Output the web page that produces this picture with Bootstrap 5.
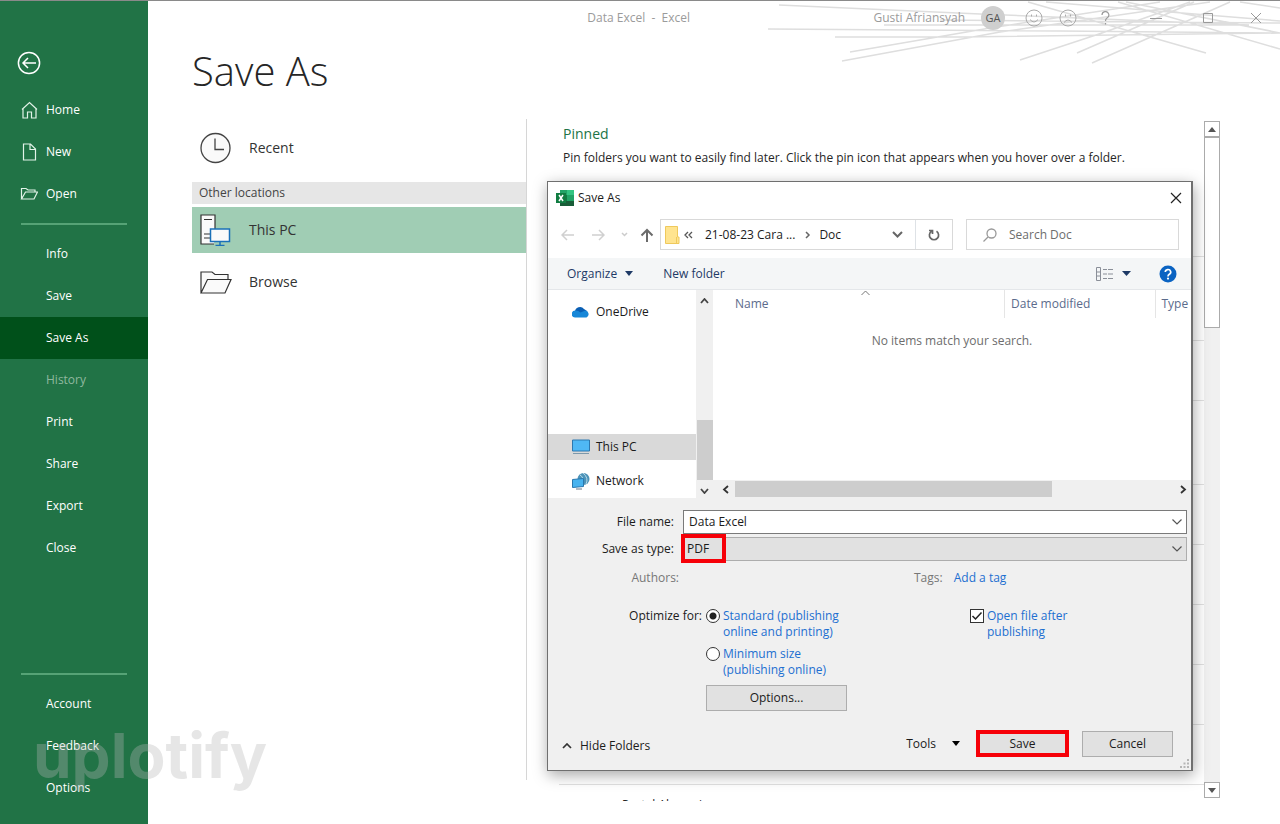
<!DOCTYPE html>
<html lang="en">
<head>
<meta charset="utf-8">
<meta name="viewport" content="width=device-width, initial-scale=1">
<title>Data Excel - Excel</title>
<link href="https://cdn.jsdelivr.net/npm/bootstrap@5.3.0/dist/css/bootstrap.min.css" rel="stylesheet">
<style>
  body { font-family: "Open Sans", "Noto Sans", sans-serif; font-size: 12px; line-height: 16px; color: #262626; background: #fff; }
  .app { min-height: 100vh; border-top: 1px solid #8a8a8a; overflow: hidden; }
  button, input, select { font: inherit; color: inherit; }
  .plain { background: none; border: 0; padding: 0; }
  svg { display: block; flex: none; }

  /* backstage navigation */
  .side { width: 148px; background: #217346; padding-top: 48px; padding-bottom: 15px; }
  .side a { color: #fff; text-decoration: none; height: 42px; padding-left: 46px; position: relative; font-weight: 500; }
  .side a svg { position: absolute; left: 20px; }
  .side .active { background: #00501a; }
  .side .off { color: #8fb89f; }
  .side .back { height: 28px; margin: 0 0 12px 16px; }
  .side hr { margin: 8px 21px; border: 0; border-top: 2px solid #56a376; opacity: 1; }
  .wmark { left: 33px; bottom: 32px; font: 700 62px/72px Inter, sans-serif; color: rgba(182,182,182,.34); pointer-events: none; z-index: 5; }

  /* window header */
  .caption { height: 33px; color: #9b9b9b; padding-right: 18px; }
  .doc-name { padding-left: 256px; }
  .lines { right: 0; top: 0; z-index: 0; }
  .avatar { width: 24px; height: 24px; background: #cfcfcf; color: #555; font-size: 11px; }
  h1 { font-size: 40px; line-height: 52px; font-weight: 300; margin: 11px 0 22px 44px; color: #262626; }
  .columns { margin-left: 44px; }

  /* places */
  .places { width: 335px; border-right: 1px solid #d6d6d6; margin-bottom: 44px; }
  .place { height: 58px; font-size: 14px; width: 100%; text-align: left; padding-left: 8px !important; gap: 17px; color: #333; }
  .place.on { background: #a0cdb4; height: 46px; }
  .band { background: #e6e6e6; height: 22px; padding: 0 7px; margin-bottom: 3px; margin-top: 5px; color: #444; line-height: 22px; }

  /* folder list behind the dialog */
  .folders { padding-right: 60px; }
  .pinned { color: #217346; font-size: 14px; line-height: 20px; margin: 5px 0 6px; font-weight: 400; }
  .rows { margin: 7px 0 0; }
  .rows li { height: 60px; border-bottom: 1px solid #e1e1e1; }
  .rows .group { height: 84px; }
  .rows .cut { height: 16px; border: 0; overflow: hidden; padding: 12px 0 0 63px; }
  .vscroll { width: 16px; background: #f0f0f0; margin-top: 2px; margin-bottom: 26px; }
  .vscroll button { width: 16px; height: 16px; background: #fff; border: 1px solid #ababab; }
  .vscroll .thumb { height: 191px; background: #fff; border: 1px solid #ababab; }

  /* file dialog */
  .dlg { left: 20px; right: 87px; top: 62px; background: #f0f0f0; border: 1px solid #6f6f6f; border-right-width: 2px; box-shadow: 1px 4px 14px rgba(0,0,0,.35); color: #1b1b1b; z-index: 3; }
  .dlg-title { background: #fff; height: 31px; padding: 0 9px 0 8px; }
  .dlg-nav { background: #fff; height: 45px; padding: 6px 12px 8px 13px; }
  .box { border: 1px solid #d9d9d9; height: 31px; background: #fff; }
  .address { margin-left: 6px; }
  .search { flex: 0 0 213px; margin-left: 13px; color: #6d6d6d; }
  .search input { outline: 0; }
  .tools { background: #f4f6f7; height: 32px; padding: 0 14px 0 19px; color: #1e3a66; border-bottom: 1px solid #e4e7ea; }
  .new-folder { margin-left: 30px; }
  .tree { width: 148px; background: #fff; padding: 9px 0 4px; }
  .tree li { height: 26px; padding-left: 24px; gap: 6px; }
  .tree .gap-big { margin-bottom: 109px; }
  .tree .on { background: #d9d9d9; margin-bottom: 8px; }
  .sb { background: #f0f0f0; width: 17px; }
  .sb i { background: #cdcdcd; height: 60px; width: 16px; }
  .pane { background: #fff; }
  .pane th { font-weight: 400; color: #5b6b8c; height: 28px; padding: 0 0 0 6px; border-right: 1px solid #e5e5e5; }
  .pane th:first-child { padding-left: 22px; width: 61%; }
  .pane th:last-child { border: 0; width: 36px; }
  .pane td { color: #6d6d6d; text-align: center; padding: 15px 0 0; }
  .sort { left: 31%; }
  .hs { height: 18px; background: #f0f0f0; }
  .hs i { background: #cdcdcd; height: 16px; width: 68%; }
  .lab { width: 127px; text-align: right; padding-right: 5px; }
  .opt-lab { width: 150px; text-align: right; }
  .meta { color: #777; margin-top: 9px; }
  .half-a { width: 57%; }
  .opts { margin-top: 22px; }
  .opts label + label { margin-top: 6px; }
  .combo { height: 24px; border: 1px solid #7a7a7a; border-radius: 0; padding: 0 6px 2px 5px; background: #fff url("data:image/svg+xml,%3Csvg xmlns='http://www.w3.org/2000/svg' width='10' height='6'%3E%3Cpath d='M.5.5 5 5 9.5.5' fill='none' stroke='%23555' stroke-width='1.2'/%3E%3C/svg%3E") no-repeat right 4px center; appearance: none; outline: 0; }
  select.combo { background-color: #e1e1e1; border-color: #adadad; padding: 0 6px 0 3px; }
  .type-row { margin-top: 3px; }
  .mark-red { border: 4px solid #f60008; pointer-events: none; left: -2px; top: -3px; width: 45px; height: 29px; }
  .blue { color: #1d6fd0; text-decoration: none; }
  .tick { appearance: none; width: 14px; height: 14px; margin: 1px 3px 0 0; border: 1px solid #333; background: #fff; flex: none; }
  .tick[type=radio] { border-radius: 50%; }
  .tick[type=radio]:checked { background: radial-gradient(circle, #222 0 3px, #fff 4px); }
  .tick[type=checkbox]:checked { background: #fff url("data:image/svg+xml,%3Csvg xmlns='http://www.w3.org/2000/svg' width='12' height='12'%3E%3Cpath d='M1.5 6 4.5 9 10.5 2.5' fill='none' stroke='%23222' stroke-width='1.5'/%3E%3C/svg%3E") no-repeat center; }
  .actions { margin-top: 19px; padding: 0 14px 13px 10px; }
  .cmd { background: #e1e1e1; border: 1px solid #adadad; height: 26px; width: 91px; }
  .cmd.wide { width: 141px; margin-top: 7px; }
  .cmd.hot { border: 4px solid #f60008; width: 93px; height: 27px; line-height: 16px; padding: 0; margin-right: 13px; }
  .grip { right: 2px; bottom: 2px; }
</style>
</head>
<body>
<div class="app d-flex position-relative">

  <nav class="side d-flex flex-column flex-shrink-0" aria-label="File">
    <button class="plain back align-self-start" aria-label="Back"><svg width="26" height="26" viewBox="0 0 26 26" fill="none" stroke="#fff" stroke-width="1.5"><circle cx="13" cy="13" r="10.6"/><path d="M20 13H7.500M12 8l-5 5 5 5"/></svg></button>
    <a href="#" class="d-flex align-items-center"><svg width="18" height="18" viewBox="0 0 18 18" fill="none" stroke="#e2f3e8" stroke-width="1.200"><path d="M2 8.500 9.500 1.500 17 8.500M3 8v9h4.500v-6h4v6H16V8"/></svg>Home</a>
    <a href="#" class="d-flex align-items-center"><svg width="18" height="18" viewBox="0 0 18 18" fill="none" stroke="#e2f3e8" stroke-width="1.200"><path d="M3.500 1h7l5 5v11h-12zM10 1v5.500h5.500"/></svg>New</a>
    <a href="#" class="d-flex align-items-center"><svg width="18" height="18" viewBox="0 0 18 18" fill="none" stroke="#e2f3e8" stroke-width="1.200"><path d="M1.500 14V3.500H6l2 1.500h7v2M1.500 14l4-7H17.500l-3.500 7z"/></svg>Open</a>
    <hr>
    <a href="#" class="d-flex align-items-center">Info</a>
    <a href="#" class="d-flex align-items-center">Save</a>
    <a href="#" class="d-flex align-items-center active" aria-current="page">Save As</a>
    <a href="#" class="d-flex align-items-center off">History</a>
    <a href="#" class="d-flex align-items-center">Print</a>
    <a href="#" class="d-flex align-items-center">Share</a>
    <a href="#" class="d-flex align-items-center">Export</a>
    <a href="#" class="d-flex align-items-center">Close</a>
    <hr class="mt-auto">
    <a href="#" class="d-flex align-items-center">Account</a>
    <a href="#" class="d-flex align-items-center">Feedback</a>
    <a href="#" class="d-flex align-items-center">Options</a>
  </nav>
  <div class="wmark position-absolute">uplotify</div>

  <svg class="lines position-absolute" width="520" height="66" viewBox="0 0 520 66" fill="none" stroke="#dedede" stroke-width="1.500"><path d="M19 4 220 13 489 24M8 28 300 30 520 32M75 36H200L520 32M124 24H489M180 19 520 22M90 51 230 27 400 1M82 60 240 31 450 1M260 59 342 32 430 1M317 52 434 1M332 62 470 1M446 52 268 1M520 48 358 1M286 1 520 20M480 1 520 7M366 1 520 32"/></svg>

  <main class="flex-grow-1 d-flex flex-column">
    <header class="caption d-flex align-items-center position-relative">
      <span class="doc-name flex-grow-1 text-center">Data Excel&nbsp; -&nbsp; Excel</span>
      <div class="d-flex align-items-center gap-3">
        <span>Gusti Afriansyah</span>
        <span class="avatar rounded-circle d-flex align-items-center justify-content-center">GA</span>
        <button class="plain ms-1" aria-label="Smile"><svg width="18" height="18" viewBox="0 0 18 18" fill="none" stroke="#aaa"><circle cx="9" cy="9" r="8"/><path d="M5 10.500q4 5 8 0M6.500 5.500v2M11.500 5.500v2"/></svg></button>
        <button class="plain" aria-label="Frown"><svg width="18" height="18" viewBox="0 0 18 18" fill="none" stroke="#aaa"><circle cx="9" cy="9" r="8"/><path d="M5 13.500q4-5 8 0M6.500 5.500v2M11.500 5.500v2"/></svg></button>
        <button class="plain ms-2" aria-label="Help"><svg width="9" height="14" fill="none" stroke="#999" stroke-width="1.200"><path d="M1 4a3.400 3.400 0 1 1 5 3Q4.500 8 4.500 10M4.500 12v1.500"/></svg></button>
        <button class="plain ms-4" aria-label="Minimize"><svg width="12" height="12" stroke="#999"><path d="M0 6.500h12"/></svg></button>
        <button class="plain ms-4" aria-label="Maximize"><svg width="12" height="12" fill="none" stroke="#999"><path d="M1.500 1.500h9v9h-9z"/></svg></button>
        <button class="plain ms-3 ps-1" aria-label="Close window"><svg width="12" height="12" stroke="#999"><path d="m1 1 10 10M11 1 1 11"/></svg></button>
      </div>
    </header>
    <h1>Save As</h1>

    <div class="columns d-flex flex-grow-1">
      <section class="places flex-shrink-0" aria-label="Places">
        <button class="plain place d-flex align-items-center"><svg width="32" height="32" viewBox="0 0 32 32" fill="#fafafa" stroke="#444" stroke-width="1.300"><circle cx="15.500" cy="16" r="14.500"/><path d="M15 6.500v11h9" fill="none"/></svg>Recent</button>
        <div class="band">Other locations</div>
        <button class="plain place on d-flex align-items-center"><svg width="32" height="32" viewBox="0 0 32 32" fill="#fafafa" stroke="#333" stroke-width="1.200"><path d="M14 30H1V1h14v15M4 5.500h8M4 20h6M4 24h6"/><path d="M10.500 15h19v12.500h-19zM20 27.500V31M15.500 31.500h9" stroke="#1a70b8" stroke-width="1.500"/></svg>This PC</button>
        <button class="plain place d-flex align-items-center"><svg width="32" height="32" viewBox="0 0 32 32" fill="#fafafa" stroke="#333" stroke-width="1.200"><path d="M1 27V6h11l3 2.500h13V13M1 27l6.500-13.500H31L25 27z"/></svg>Browse</button>
      </section>

      <section class="folders position-relative flex-grow-1 d-flex" aria-label="Folders">
        <div class="flex-grow-1 ps-4 ms-2">
          <div class="ps-1">
            <h2 class="pinned">Pinned</h2>
            <div>Pin folders you want to easily find later. Click the pin icon that appears when you hover over a folder.</div>
          </div>
          <ul class="rows list-unstyled">
            <li class="group"></li><li class="group"></li><li></li><li class="group"></li><li></li><li></li><li></li><li></li><li></li>
            <li class="cut">Portal Absensi</li>
          </ul>
        </div>
        <div class="vscroll d-flex flex-column flex-shrink-0">
          <button class="plain d-flex align-items-center justify-content-center" aria-label="Scroll up"><svg width="8" height="5" fill="#555"><path d="M0 5 4 0l4 5z"/></svg></button>
          <div class="thumb"></div>
          <button class="mt-auto plain d-flex align-items-center justify-content-center" aria-label="Scroll down"><svg width="8" height="5" fill="#555"><path d="M0 0h8L4 5z"/></svg></button>
        </div>

        <div class="dlg position-absolute" role="dialog" aria-label="Save As">
          <div class="dlg-title d-flex align-items-center gap-1">
            <svg width="18" height="18" viewBox="0 0 18 18"><path fill="#21a366" d="M4 1h14v16H4z"/><path fill="#33c481" d="M11 1h7v5h-7z"/><path fill="#107c41" d="M4 6h7v6H4z"/><path fill="#185c37" d="M4 12h14v5H4z"/><path fill="#107c41" d="M0 4h10v10H0z"/><path d="m3 6 4 6M7 6l-4 6" stroke="#fff" stroke-width="1.500"/></svg>
            <span>Save As</span>
            <button class="plain ms-auto" aria-label="Close"><svg width="12" height="12" stroke="#222" stroke-width="1.200"><path d="m1 1 10 10M11 1 1 11"/></svg></button>
          </div>
          <div class="dlg-nav d-flex align-items-center">
            <button class="plain" aria-label="Back"><svg width="14" height="12" fill="none" stroke="#d0d0d0" stroke-width="1.500"><path d="M13 6H1M6 1 1 6l5 5"/></svg></button>
            <button class="plain ms-3" aria-label="Forward"><svg width="14" height="12" fill="none" stroke="#d0d0d0" stroke-width="1.500"><path d="M1 6h12M8 1l5 5-5 5"/></svg></button>
            <button class="plain ms-3" aria-label="History"><svg width="7" height="5" fill="none" stroke="#ccc" stroke-width="1.500"><path d="m1 1 2.500 2.500L6 1"/></svg></button>
            <button class="plain ms-2 ps-1" aria-label="Up"><svg width="14" height="14" fill="none" stroke="#6b6b6b" stroke-width="2"><path d="M7 14V2M1.500 7.500 7 2l5.500 5.500"/></svg></button>
            <div class="box address d-flex align-items-center flex-grow-1 ps-1">
              <svg width="15" height="18" viewBox="0 0 15 18"><path fill="#ffe48f" stroke="#efc95c" d="M.5.5h12V11h1.500v6.500H.5z"/><path stroke="#efc95c" d="M11.500 11v6"/></svg>
              <svg class="ms-1" width="9" height="8" fill="none" stroke="#555" stroke-width="1.300"><path d="M4 1 1 4l3 3M8 1 5 4l3 3"/></svg><span class="ms-2 ps-1">21-08-23 Cara ...</span>
              <svg class="mx-2" width="8" height="8" fill="none" stroke="#666" stroke-width="1.500"><path d="m3 1 3 3-3 3"/></svg>
              <span>Doc</span>
              <button class="plain ms-auto me-2 pe-1" aria-label="Previous locations"><svg width="11" height="7" fill="none" stroke="#666" stroke-width="2"><path d="m1 1 4.500 4.500L10 1"/></svg></button>
              <button class="plain border-start px-2 h-100 d-flex align-items-center" aria-label="Refresh"><svg class="mx-1" width="12" height="13" viewBox="0 0 12 13" fill="none" stroke="#666" stroke-width="1.700"><path d="M8.500 3.300a4.600 4.600 0 1 1-5 0M1 2.500h3.500V6"/></svg></button>
            </div>
            <label class="box search d-flex align-items-center ps-3"><svg width="14" height="14" fill="none" stroke="#999" stroke-width="1.300"><circle cx="8.500" cy="5.500" r="4.500"/><path d="M5 9 .5 13.500"/></svg><input class="plain ms-2 ps-1 w-75" aria-label="Search" value="Search Doc"></label>
          </div>
          <div class="tools d-flex align-items-center">
            <button class="plain d-flex align-items-center">Organize<svg class="ms-2" width="8" height="5" fill="#1e3a66"><path d="M0 0h8L4 5z"/></svg></button>
            <button class="plain new-folder">New folder</button>
            <button class="plain ms-auto d-flex align-items-center" aria-label="View"><svg width="18" height="14" fill="none" stroke="#8a8f98"><path d="M.5.500h4v13h-4zM.5 5h4M.5 9h4M7 2.500h4M12 2.500h5M7 7h4M12 7h5M7 11.500h4M12 11.500h5"/></svg><svg class="ms-2" width="9" height="5" fill="#1e3a66"><path d="M0 0h9L4.500 5z"/></svg></button>
            <button class="plain ms-4 ps-1" aria-label="Help"><svg width="18" height="18"><circle cx="9" cy="9" r="8.500" fill="#0a63c2"/><path d="M6.300 7a2.700 2.500 0 1 1 4 2.200q-1.300.8-1.300 2.200" fill="none" stroke="#fff" stroke-width="1.700"/><circle cx="9" cy="13.600" r="1.100" fill="#fff"/></svg></button>
          </div>

          <div class="d-flex">
            <ul class="tree list-unstyled mb-0 flex-shrink-0">
              <li class="gap-big d-flex align-items-center"><svg width="18" height="12" viewBox="0 0 18 12"><path fill="#0a5fb4" d="M3 6a5 5 0 0 1 9-3l3 2-9 5z"/><path fill="#1787d8" d="M3 11.500A3.500 3.500 0 0 1 3.500 4.500q3 0 5 2l5-2a3.700 3.700 0 0 1 1 7z"/></svg>OneDrive</li>
              <li class="on d-flex align-items-center"><svg width="18" height="16" viewBox="0 0 18 16"><path fill="#4fb8f5" stroke="#2c78b0" d="M.5 1h17v11H.5z"/><path d="M1 14.500h16" stroke="#7c98ab"/></svg>This PC</li>
              <li class="d-flex align-items-center"><svg width="18" height="18" viewBox="0 0 18 18"><circle cx="11.500" cy="7" r="6" fill="#4d93b8"/><path d="M8 3q4 2 3 9M11 1q6 5 3 11" stroke="#b7dcec" fill="none"/><path fill="#48b3ef" stroke="#2a78ae" d="m.5 7.500 11-1v8l-11 1z"/><path d="M4 17h6" stroke="#678"/></svg>Network</li>
            </ul>
            <div class="sb d-flex flex-column align-items-center flex-shrink-0 py-1">
              <svg class="mt-1" width="9" height="6" fill="none" stroke="#444" stroke-width="1.800"><path d="m1 5 3.500-4L8 5"/></svg>
              <i class="mt-auto"></i>
              <svg class="mt-2" width="9" height="6" fill="none" stroke="#444" stroke-width="1.800"><path d="m1 1 3.500 4L8 1"/></svg>
            </div>
            <div class="pane flex-grow-1 d-flex flex-column position-relative">
              <svg class="sort position-absolute" width="9" height="6" fill="none" stroke="#777"><path d="m.5 5 4-4 4 4"/></svg>
              <table class="w-100">
                <thead><tr><th>Name</th><th>Date modified</th><th>Type</th></tr></thead>
                <tbody><tr><td colspan="3">No items match your search.</td></tr></tbody>
              </table>
              <div class="hs mt-auto d-flex align-items-center ps-2 pe-1 gap-1">
                <svg width="10" height="9" fill="none" stroke="#333" stroke-width="1.800"><path d="M7 1 3 4.500 7 8"/></svg>
                <i></i>
                <svg class="ms-auto" width="7" height="9" fill="none" stroke="#333" stroke-width="1.800"><path d="m1 1 4 3.500L1 8"/></svg>
              </div>
            </div>
          </div>

          <form class="pt-2 px-1" onsubmit="return false">
            <div class="d-flex align-items-center mt-1"><label class="lab" for="fname">File name:</label><input id="fname" class="combo flex-grow-1 ms-1" value="Data Excel"></div>
            <div class="type-row d-flex align-items-center"><label class="lab" for="ftype">Save as type:</label><div class="position-relative flex-grow-1 d-flex ms-1"><select id="ftype" class="combo w-100"><option>PDF</option></select><span class="mark-red position-absolute"></span></div></div>
            <div class="meta d-flex">
              <div class="half-a"><div class="lab pe-0">Authors:</div></div>
              <div>Tags: <a href="#" class="blue ms-2">Add a tag</a></div>
            </div>
            <div class="opts d-flex">
              <div class="half-a d-flex">
                <div class="opt-lab">Optimize for:</div>
                <div class="ms-1">
                  <label class="d-flex blue"><input type="radio" class="tick" name="opt" checked><span>Standard (publishing<br>online and printing)</span></label>
                  <label class="d-flex blue"><input type="radio" class="tick" name="opt"><span>Minimum size<br>(publishing online)</span></label>
                  <button class="cmd wide">Options...</button>
                </div>
              </div>
              <div class="ps-5"><label class="d-flex blue ms-2"><input type="checkbox" class="tick" checked><span>Open file after<br>publishing</span></label></div>
            </div>
            <div class="actions d-flex align-items-center">
              <button class="plain d-flex align-items-center mt-1"><svg class="me-2" width="10" height="6" fill="none" stroke="#333" stroke-width="1.700"><path d="m1 5 4-4 4 4"/></svg>Hide Folders</button>
              <button class="plain ms-auto d-flex align-items-center">Tools<svg class="ms-3" width="8" height="5"><path d="M0 0h8L4 5z"/></svg></button>
              <button class="cmd hot ms-3">Save</button>
              <button class="cmd">Cancel</button>
            </div>
          </form>
          <svg class="grip position-absolute" width="9" height="9" fill="#b5b5b5"><path d="M7 0h2v2H7zM7 3.500h2v2H7zM7 7h2v2H7zM3.500 3.500h2v2h-2zM3.500 7h2v2h-2zM0 7h2v2H0z"/></svg>
        </div>
      </section>
    </div>
  </main>
</div>
<script src="https://cdn.jsdelivr.net/npm/bootstrap@5.3.0/dist/js/bootstrap.bundle.min.js"></script>
</body>
</html>
